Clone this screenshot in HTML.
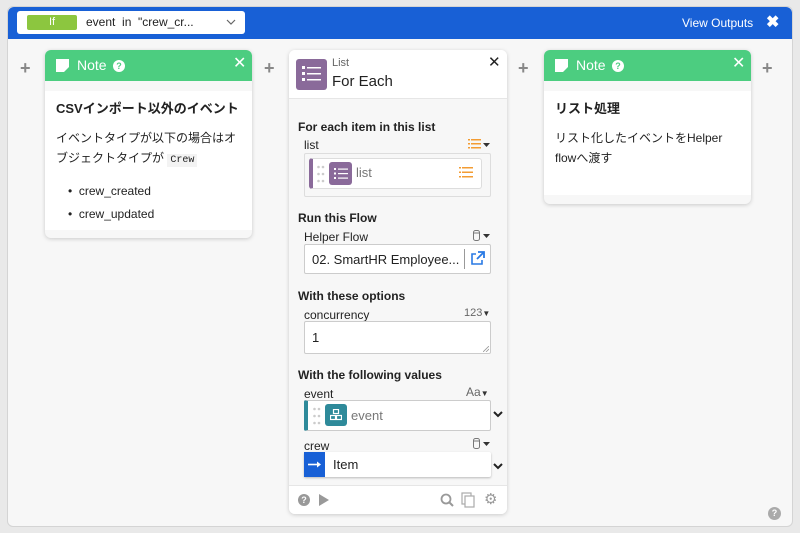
<!DOCTYPE html>
<html><head><meta charset="utf-8"><style>
*{box-sizing:border-box;margin:0;padding:0}
body{width:800px;height:533px;background:#e9e9e9;font-family:"Liberation Sans","Noto Sans CJK JP",sans-serif;color:#222;position:relative;overflow:hidden}
.abs{position:absolute}
.frame{left:7px;top:6px;width:786px;height:521px;background:#f7f7f7;border:1px solid #d4d4d4;border-radius:6px}
.bar{left:8px;top:7px;width:784px;height:32px;background:#1860d6;border-radius:6px 6px 0 0}
.sel{left:17px;top:11px;width:228px;height:23px;background:#fff;border-radius:3px}
.if{left:27px;top:15px;width:50px;height:15px;background:#8cc63f;border-radius:2px;color:#fff;font-size:11px;text-align:center;line-height:15px}
.card{background:#fff;border-radius:6px;box-shadow:0 1px 4px rgba(0,0,0,.18)}
.nh{background:#4ccd80;height:31px;border-radius:6px 6px 0 0;color:#fff;font-size:14px}
.plus{color:#888;font-size:18px;font-weight:bold}
.lbl{font-size:12px;color:#222}
.sec{font-size:12px;font-weight:bold;color:#222}
</style></head><body>
<div class="abs frame"></div>
<div class="abs bar"></div>
<div class="abs sel"></div>
<div class="abs if">If</div>
<div class="abs" style="left:86px;top:15px;font-size:12px">event&nbsp; in&nbsp; "crew_cr...</div>
<svg class="abs" style="left:226px;top:18px" width="10" height="8"><path d="M1 2l4 4 4-4" stroke="#666" fill="none" stroke-width="1.2"/></svg>
<div class="abs" style="left:682px;top:16px;font-size:12px;color:#fff">View Outputs</div>
<div class="abs" style="left:766px;top:12px;font-size:16px;color:#fff;font-weight:bold">✖</div>

<div class="abs plus" style="left:20px;top:58px">+</div>
<div class="abs plus" style="left:264px;top:58px">+</div>
<div class="abs plus" style="left:518px;top:58px">+</div>
<div class="abs plus" style="left:762px;top:58px">+</div>

<!-- Note 1 -->
<div class="abs card" style="left:45px;top:50px;width:207px;height:188px;background:#f7f7f7">
 <div class="nh" style="position:relative">
  <svg class="abs" style="left:11px;top:9px" width="13" height="13"><path d="M0 0h13v8l-5 5H0z" fill="#fff"/></svg>
  <div class="abs" style="left:32px;top:7px;font-size:14px">Note</div>
  <div class="abs" style="left:68px;top:10px;width:12px;height:12px;background:#fff;border-radius:50%;color:#4ccd80;font-size:9px;text-align:center;line-height:12px;font-weight:bold">?</div>
  <div class="abs" style="left:188px;top:3px;font-size:16px">✕</div>
 </div>
 <div style="background:#fff;margin-top:10px;height:139px;padding:7px 11px">
  <div style="font-size:13px;font-weight:bold">CSVインポート以外のイベント</div>
  <div style="font-size:12px;line-height:20px;margin-top:11px">イベントタイプが以下の場合はオブジェクトタイプが <span style="font-family:'Liberation Mono',monospace;font-size:10px;background:#f3f3f3;padding:1px 3px">Crew</span></div>
  <div style="font-size:12px;margin-top:13px;padding-left:12px">• &nbsp;crew_created</div>
  <div style="font-size:12px;margin-top:9px;padding-left:12px">• &nbsp;crew_updated</div>
 </div>
</div>

<!-- Note 2 -->
<div class="abs card" style="left:544px;top:50px;width:207px;height:154px;background:#f7f7f7">
 <div class="nh" style="position:relative">
  <svg class="abs" style="left:11px;top:9px" width="13" height="13"><path d="M0 0h13v8l-5 5H0z" fill="#fff"/></svg>
  <div class="abs" style="left:32px;top:7px;font-size:14px">Note</div>
  <div class="abs" style="left:68px;top:10px;width:12px;height:12px;background:#fff;border-radius:50%;color:#4ccd80;font-size:9px;text-align:center;line-height:12px;font-weight:bold">?</div>
  <div class="abs" style="left:188px;top:3px;font-size:16px">✕</div>
 </div>
 <div style="background:#fff;margin-top:10px;height:104px;padding:7px 11px">
  <div style="font-size:13px;font-weight:bold">リスト処理</div>
  <div style="font-size:12px;line-height:20px;margin-top:11px">リスト化したイベントをHelper flowへ渡す</div>
 </div>
</div>

<!-- For Each -->
<div class="abs card" style="left:289px;top:50px;width:218px;height:464px;background:#f7f7f7">
 <div style="background:#fff;height:49px;border-bottom:1px solid #e6e6e6;border-radius:6px 6px 0 0;position:relative">
  <div class="abs" style="left:7px;top:9px;width:31px;height:31px;background:#8a6a9a;border-radius:3px"></div>
  <svg class="abs" style="left:13px;top:16px" width="20" height="16"><g fill="#fff"><rect x="0" y="0" width="3" height="3"/><rect x="0" y="6" width="3" height="3"/><rect x="0" y="12" width="3" height="3"/><rect x="5" y="1" width="14" height="1.5"/><rect x="5" y="7" width="14" height="1.5"/><rect x="5" y="13" width="14" height="1.5"/></g></svg>
  <div class="abs" style="left:43px;top:7px;font-size:11px;color:#666">List</div>
  <div class="abs" style="left:43px;top:23px;font-size:15px">For Each</div>
  <div class="abs" style="left:199px;top:3px;font-size:15px">✕</div>
 </div>
 <div class="abs sec" style="left:9px;top:70px">For each item in this list</div>
 <div class="abs lbl" style="left:15px;top:88px">list</div>
 <svg class="abs" style="left:179px;top:89px" width="24" height="10"><g fill="#f39c33"><rect x="0" y="0" width="2" height="1.5"/><rect x="0" y="4" width="2" height="1.5"/><rect x="0" y="8" width="2" height="1.5"/><rect x="3" y="0" width="10" height="1.5"/><rect x="3" y="4" width="10" height="1.5"/><rect x="3" y="8" width="10" height="1.5"/></g><path d="M15 4h7l-3.5 4z" fill="#333"/></svg>
 <div class="abs" style="left:15px;top:103px;width:187px;height:44px;border:1px solid #ddd;border-radius:2px"></div>
 <div class="abs" style="left:20px;top:108px;width:173px;height:31px;background:#fff;border:1px solid #ddd;border-left:4px solid #8a6a9a;border-radius:3px"></div>
 <svg class="abs" style="left:28px;top:115px" width="8" height="18"><g fill="#ccc"><circle cx="1.5" cy="2" r="1.3"/><circle cx="6" cy="2" r="1.3"/><circle cx="1.5" cy="9" r="1.3"/><circle cx="6" cy="9" r="1.3"/><circle cx="1.5" cy="16" r="1.3"/><circle cx="6" cy="16" r="1.3"/></g></svg>
 <div class="abs" style="left:40px;top:112px;width:23px;height:23px;background:#8a6a9a;border-radius:3px"></div>
 <svg class="abs" style="left:45px;top:118px" width="14" height="11"><g fill="#fff"><rect x="0" y="0" width="2" height="2"/><rect x="0" y="4.5" width="2" height="2"/><rect x="0" y="9" width="2" height="2"/><rect x="4" y="0.5" width="10" height="1.2"/><rect x="4" y="5" width="10" height="1.2"/><rect x="4" y="9.5" width="10" height="1.2"/></g></svg>
 <div class="abs" style="left:67px;top:115px;font-size:13px;color:#777">list</div>
 <svg class="abs" style="left:170px;top:117px" width="14" height="11"><g fill="#f39c33"><rect x="0" y="0" width="2" height="1.5"/><rect x="0" y="4.5" width="2" height="1.5"/><rect x="0" y="9" width="2" height="1.5"/><rect x="3" y="0" width="11" height="1.5"/><rect x="3" y="4.5" width="11" height="1.5"/><rect x="3" y="9" width="11" height="1.5"/></g></svg>

 <div class="abs sec" style="left:9px;top:161px">Run this Flow</div>
 <div class="abs lbl" style="left:15px;top:180px">Helper Flow</div>
 <svg class="abs" style="left:184px;top:180px" width="18" height="11"><g fill="none" stroke="#777" stroke-width="1"><rect x="0.5" y="0.5" width="6" height="10" rx="2"/><path d="M0.5 3h6"/></g><path d="M10 4h7l-3.5 4z" fill="#333"/></svg>
 <div class="abs" style="left:15px;top:194px;width:187px;height:30px;background:#fff;border:1px solid #ccc;border-radius:2px"></div>
 <div class="abs" style="left:23px;top:202px;font-size:13px">02. SmartHR Employee...</div>
 <div class="abs" style="left:175px;top:199px;width:1px;height:20px;background:#999"></div>
 <svg class="abs" style="left:181px;top:201px" width="15" height="15"><path d="M6 3H2v10h10V9" stroke="#2a7ae4" stroke-width="1.6" fill="none"/><path d="M8 1h6v6M14 1L7 8" stroke="#2a7ae4" stroke-width="1.8" fill="none"/></svg>

 <div class="abs sec" style="left:9px;top:239px">With these options</div>
 <div class="abs lbl" style="left:15px;top:258px">concurrency</div>
 <div class="abs" style="left:175px;top:257px;font-size:11px;color:#666">123<span style="font-size:8px;color:#333">▼</span></div>
 <div class="abs" style="left:15px;top:271px;width:187px;height:33px;background:#fff;border:1px solid #ccc;border-radius:2px"></div>
 <svg class="abs" style="left:194px;top:296px" width="6" height="6"><path d="M0 6L6 0M3 6L6 3" stroke="#999" stroke-width="0.8"/></svg>
 <div class="abs" style="left:23px;top:280px;font-size:13px">1</div>

 <div class="abs sec" style="left:9px;top:318px">With the following values</div>
 <div class="abs lbl" style="left:15px;top:337px">event</div>
 <div class="abs" style="left:177px;top:335px;font-size:12px;color:#666">Aa<span style="font-size:8px;color:#333">▼</span></div>
 <div class="abs" style="left:15px;top:350px;width:187px;height:31px;background:#fff;border:1px solid #ccc;border-left:4px solid #2e8a9a;border-radius:2px"></div>
 <svg class="abs" style="left:24px;top:357px" width="8" height="18"><g fill="#ccc"><circle cx="1.5" cy="2" r="1.3"/><circle cx="6" cy="2" r="1.3"/><circle cx="1.5" cy="9" r="1.3"/><circle cx="6" cy="9" r="1.3"/><circle cx="1.5" cy="16" r="1.3"/><circle cx="6" cy="16" r="1.3"/></g></svg>
 <div class="abs" style="left:36px;top:354px;width:22px;height:22px;background:#2e8a9a;border-radius:3px"></div>
 <svg class="abs" style="left:41px;top:359px" width="12" height="12"><g stroke="#fff" fill="none" stroke-width="1.2"><rect x="3.5" y="0.5" width="5" height="4"/><rect x="0.5" y="6.5" width="5" height="4"/><rect x="6.5" y="6.5" width="5" height="4"/></g></svg>
 <div class="abs" style="left:62px;top:358px;font-size:13px;color:#777">event</div>
 <svg class="abs" style="left:204px;top:361px" width="10" height="7"><path d="M1 1l4 4 4-4" stroke="#222" stroke-width="2" fill="none"/></svg>

 <div class="abs lbl" style="left:15px;top:389px">crew</div>
 <svg class="abs" style="left:184px;top:388px" width="18" height="11"><g fill="none" stroke="#777" stroke-width="1"><rect x="0.5" y="0.5" width="6" height="10" rx="2"/><path d="M0.5 3h6"/></g><path d="M10 4h7l-3.5 4z" fill="#333"/></svg>
 <div class="abs" style="left:15px;top:402px;width:187px;height:25px;background:#fff;border-radius:2px;box-shadow:0 1px 2px rgba(0,0,0,.25)"></div>
 <div class="abs" style="left:15px;top:402px;width:21px;height:25px;background:#1860d6"></div>
 <svg class="abs" style="left:19px;top:410px" width="14" height="9"><path d="M0 4.5h11" stroke="#fff" stroke-width="1.6"/><path d="M9 1.5l4 3-4 3z" fill="#fff"/></svg>
 <div class="abs" style="left:44px;top:407px;font-size:13px">Item</div>
 <svg class="abs" style="left:204px;top:413px" width="10" height="7"><path d="M1 1l4 4 4-4" stroke="#222" stroke-width="2" fill="none"/></svg>

 <div class="abs" style="left:0;top:435px;width:218px;height:29px;background:#fff;border-top:1px solid #e6e6e6;border-radius:0 0 6px 6px"></div>
 <div class="abs" style="left:9px;top:444px;width:12px;height:12px;background:#999;border-radius:50%;color:#fff;font-size:9px;text-align:center;line-height:12px;font-weight:bold">?</div>
 <svg class="abs" style="left:29px;top:443px" width="12" height="14"><path d="M1 1l10 6-10 6z" fill="#999"/></svg>
 <svg class="abs" style="left:151px;top:443px" width="14" height="14"><circle cx="6" cy="6" r="4.5" stroke="#999" stroke-width="1.8" fill="none"/><path d="M9 9l4 4" stroke="#999" stroke-width="2"/></svg>
 <svg class="abs" style="left:172px;top:442px" width="15" height="16"><rect x="1" y="1" width="9" height="11" stroke="#aaa" fill="none" stroke-width="1.2"/><rect x="4" y="4" width="9" height="11" stroke="#aaa" fill="#fff" stroke-width="1.2"/></svg>
 <div class="abs" style="left:195px;top:440px;font-size:15px;color:#999">⚙</div>
</div>

<div class="abs" style="left:768px;top:507px;width:13px;height:13px;background:#aaa;border-radius:50%;color:#fff;font-size:9px;text-align:center;line-height:13px;font-weight:bold">?</div>
</body></html>
